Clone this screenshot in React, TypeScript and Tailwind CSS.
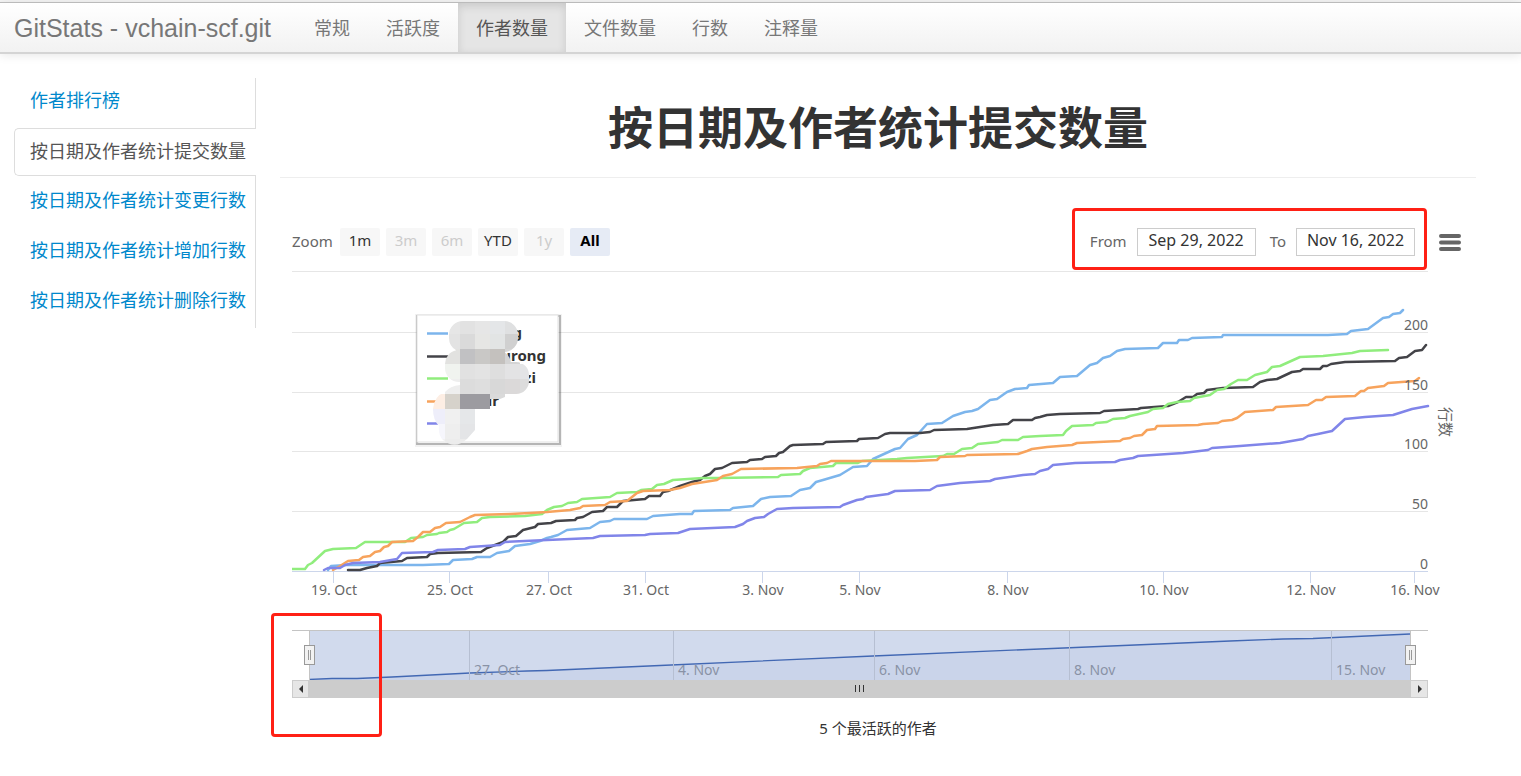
import React, { useState } from 'react';

interface Series {
  id: string;
  color: string;
  label: string;
  labelEnd: number;
  swatch: number;
  points: string;
}

const NAV_ITEMS = ['常规', '活跃度', '作者数量', '文件数量', '行数', '注释量'];

const SIDE_ITEMS = [
  '作者排行榜',
  '按日期及作者统计提交数量',
  '按日期及作者统计变更行数',
  '按日期及作者统计增加行数',
  '按日期及作者统计删除行数',
];

const RANGES = [
  { label: '1m', disabled: false },
  { label: '3m', disabled: true },
  { label: '6m', disabled: true },
  { label: 'YTD', disabled: false },
  { label: '1y', disabled: true },
  { label: 'All', disabled: false },
];

const SERIES: Series[] = [
  {
    id: 'a',
    color: '#7cb5ec',
    label: 'g',
    labelEnd: 522,
    swatch: 333,
    points:
      '328,570 331,566 347,565 423,565 449,564 453,560 472,559 477,557 490,557 497,553 509,551 515,546 530,544 540,541 547,538 551,537 558,535 567,530 590,528 600,522 610,521 614,519 647,519 653,516 680,514 692,514 694,511 730,510 733,508 753,506 761,499 770,497 791,496 800,490 810,488 816,482 823,480 840,475 853,467 867,466 873,459 895,449 900,448 908,439 917,435 927,424 942,423 953,416 965,412 972,411 978,409 990,400 997,399 1007,392 1015,389 1027,388 1029,385 1053,383 1060,377 1077,376 1090,365 1097,363 1103,358 1110,356 1117,351 1125,349 1158,348 1163,343 1177,343 1179,340 1188,340 1192,338 1222,337 1223,335 1328,335 1347,334 1351,331 1368,329 1383,318 1389,317 1393,314 1400,313 1403,310',
  },
  {
    id: 'b',
    color: '#434348',
    label: 'urong',
    labelEnd: 546,
    swatch: 356,
    points:
      '348,570 360,570 367,568 377,566 380,563 402,561 407,558 427,557 430,554 438,553 481,552 487,548 503,542 508,537 516,536 523,530 535,527 538,524 551,523 556,521 575,520 577,518 583,517 592,512 603,511 607,507 617,507 623,501 645,499 649,496 660,496 663,492 668,491 680,486 692,482 700,480 705,476 710,474 715,469 722,468 732,463 747,462 750,460 762,459 765,457 776,456 779,453 783,452 790,446 793,445 823,444 826,442 857,441 859,439 878,438 885,434 890,433 920,433 930,432 934,430 967,429 993,425 1008,424 1013,420 1032,420 1035,418 1040,417 1047,415 1060,414 1100,413 1104,411 1138,409 1141,408 1168,406 1178,402 1186,397 1193,397 1197,394 1204,393 1207,390 1223,388 1253,387 1260,382 1267,380 1277,379 1292,372 1300,371 1303,369 1320,369 1323,366 1327,366 1331,364 1345,362 1395,361 1399,358 1407,357 1415,351 1422,350 1426,345',
  },
  {
    id: 'c',
    color: '#90ed7d',
    label: 'zi',
    labelEnd: 536,
    swatch: 378,
    points:
      '292,569 305,569 308,565 312,563 325,551 333,549 356,548 359,546 365,542 405,542 411,538 423,537 427,535 437,534 439,533 447,532 450,530 454,529 464,523 477,522 482,518 490,517 525,516 542,514 547,510 554,507 562,506 568,503 577,502 582,499 610,497 617,493 637,492 641,490 652,489 657,485 664,484 673,480 703,478 720,478 778,477 781,475 800,474 803,471 810,468 833,466 836,463 858,463 862,461 897,459 907,458 943,456 947,454 954,454 962,449 972,448 978,444 998,442 1002,440 1018,440 1023,437 1040,436 1063,435 1066,431 1072,426 1093,425 1096,423 1107,422 1113,419 1125,418 1130,416 1148,412 1153,409 1163,408 1168,404 1177,402 1190,401 1194,398 1210,395 1217,390 1224,389 1231,384 1238,380 1247,380 1255,375 1267,372 1272,367 1280,366 1300,357 1323,356 1352,353 1360,351 1388,350',
  },
  {
    id: 'd',
    color: '#f7a35c',
    label: 'ir',
    labelEnd: 499,
    swatch: 401,
    points:
      '333,570 340,566 348,561 359,560 363,557 370,556 375,552 380,551 384,547 388,546 392,542 413,541 418,537 423,532 430,532 435,528 440,527 446,523 460,522 470,517 475,515 510,514 530,513 547,512 570,510 580,508 583,506 605,505 610,502 627,501 637,493 643,491 670,490 680,488 692,484 717,480 723,476 732,474 741,469 797,468 817,466 820,464 827,463 831,461 915,461 937,460 940,457 965,456 967,455 1018,454 1027,451 1032,449 1047,447 1072,445 1077,443 1120,441 1123,439 1130,438 1134,436 1142,435 1147,430 1155,429 1157,426 1198,425 1203,424 1218,423 1222,421 1232,420 1237,418 1245,412 1273,410 1276,407 1308,405 1316,400 1322,400 1326,397 1355,396 1361,391 1364,391 1368,388 1384,386 1388,383 1415,381 1419,378',
  },
  {
    id: 'e',
    color: '#8085e9',
    label: '',
    labelEnd: 476,
    swatch: 423,
    points:
      '324,570 328,568 340,568 345,565 353,563 380,562 397,559 402,553 433,552 438,550 465,549 470,547 500,545 505,542 547,540 593,538 600,536 645,535 650,534 678,533 690,529 735,527 743,524 747,521 755,518 764,517 768,514 777,509 793,508 840,507 843,505 857,500 863,499 866,497 888,494 895,491 930,490 937,486 960,483 990,481 995,479 1023,475 1035,474 1040,471 1048,469 1053,465 1075,463 1115,462 1120,460 1133,458 1138,456 1183,453 1208,450 1212,448 1240,446 1280,443 1303,439 1308,436 1318,434 1332,431 1345,419 1365,417 1393,415 1412,409 1428,406',
  },
];

const Y_AXIS = [
  { label: '200', y: 332 },
  { label: '150', y: 392 },
  { label: '100', y: 451 },
  { label: '50', y: 511 },
  { label: '0', y: 571 },
];

const X_AXIS = [
  { label: '19. Oct', x: 333 },
  { label: '25. Oct', x: 449 },
  { label: '27. Oct', x: 548 },
  { label: '31. Oct', x: 645 },
  { label: '3. Nov', x: 762 },
  { label: '5. Nov', x: 859 },
  { label: '8. Nov', x: 1007 },
  { label: '10. Nov', x: 1163 },
  { label: '12. Nov', x: 1310 },
  { label: '16. Nov', x: 1414 },
];

const NAVIGATOR_TICKS = [
  { label: '27. Oct', x: 177 },
  { label: '4. Nov', x: 381 },
  { label: '6. Nov', x: 582 },
  { label: '8. Nov', x: 777 },
  { label: '15. Nov', x: 1039 },
];

// Mosaic over the author names, one row per 15px band: [x, color]
const MOSAIC: { y: number; cells: [number, string][] }[] = [
  { y: 319, cells: [[445, '#e6e6e6'], [460, '#e2e2e2'], [475, '#e6e6e6'], [490, '#e4e6e8'], [505, '#dfe0e1']] },
  { y: 334, cells: [[445, '#e3e3e3'], [460, '#dadada'], [475, '#e6e6e4'], [490, '#e2e4e4'], [505, '#d0d0d0']] },
  { y: 349, cells: [[445, '#e2e2e0'], [460, '#c1c1c3'], [475, '#c9c8c6'], [490, '#c4c1be'], [505, '#d4d4d4']] },
  { y: 364, cells: [[445, '#f0f3ef'], [460, '#e1e1e1'], [475, '#e3e3e3'], [490, '#dedede'], [505, '#e3e3e4'], [520, '#e3e4e6']] },
  { y: 379, cells: [[445, '#eeeeee'], [460, '#dcdcdc'], [475, '#dedede'], [490, '#d8d8d8'], [505, '#dbd9d9'], [520, '#dcdcdc']] },
  { y: 394, cells: [[430, '#fdeee4'], [445, '#d6d2cb'], [460, '#9c9ba0'], [475, '#9c9ba0'], [490, '#dadada']] },
  { y: 409, cells: [[430, '#eeeefa'], [445, '#f0f0f0'], [460, '#e5e7e9']] },
  { y: 424, cells: [[430, '#f6f6fc'], [445, '#eeeeee'], [460, '#e4e5e7']] },
  { y: 439, cells: [[430, '#f2f2f2'], [445, '#ececec'], [460, '#ececec']] },
];

const Navbar: React.FC = () => (
  <header className="border-t-2 border-[#f5f5f5]">
    <nav className="flex h-[52px] items-stretch border-t border-b-2 border-t-[#bbbbbb] border-b-[#d4d4d4] bg-gradient-to-b from-white to-[#f2f2f2] pl-3.5 shadow-[0_1px_10px_rgba(0,0,0,0.1)]">
      <a href="#" className="mr-[25px] flex items-center pt-0.5 font-['Liberation_Sans',sans-serif] text-[25px] text-[#777777]">
        GitStats - vchain-scf.git
      </a>
      {NAV_ITEMS.map((item) => (
        <a
          key={item}
          href="#"
          className={
            item === '作者数量'
              ? 'flex items-center bg-[#e5e5e5] px-[18px] text-lg text-[#555555] shadow-[inset_0_3px_8px_rgba(0,0,0,0.125)]'
              : 'flex items-center px-[18px] text-lg text-[#777777]'
          }
        >
          {item}
        </a>
      ))}
    </nav>
  </header>
);

const Sidebar: React.FC = () => (
  <ul className="w-[242px] shrink-0">
    {SIDE_ITEMS.map((item, i) => (
      <li key={item} className={i === 1 ? 'h-[50px]' : 'h-[50px] border-r border-[#dddddd]'}>
        {i === 1 ? (
          <div className="flex h-full flex-col">
            <a href="#" className="flex h-12 items-center rounded-l-[5px] border border-r-0 border-[#dddddd] pb-0.5 pl-[15px] text-lg whitespace-nowrap text-[#555555]">
              {item}
            </a>
            <span className="flex-1 border-r border-[#dddddd]" />
          </div>
        ) : (
          <a href="#" className="flex h-11 items-center pl-4 text-lg whitespace-nowrap text-[#0088cc]">
            {item}
          </a>
        )}
      </li>
    ))}
  </ul>
);

const DateField: React.FC<{ id: string; label: string; value: string }> = ({ id, label, value }) => (
  <div className="flex items-center">
    <label htmlFor={id} className="mr-2.5 pb-0.5 text-[#666666]">
      {label}
    </label>
    <input
      id={id}
      type="text"
      defaultValue={value}
      className="h-7 w-[119px] border border-[#cccccc] bg-white pb-1 text-center text-base text-[#333333] outline-none"
    />
  </div>
);

const Toolbar: React.FC = () => {
  const [range, setRange] = useState('All');

  return (
    <div className="flex h-7 items-center pr-[15px] text-[15px]">
      <span className="w-12 pb-0.5 text-[#666666]">Zoom</span>
      <div className="flex gap-1.5">
        {RANGES.map(({ label, disabled }) => (
          <button
            key={label}
            type="button"
            disabled={disabled}
            onClick={() => setRange(label)}
            className={
              label === range
                ? 'h-7 w-10 rounded-[2px] bg-[#e6ebf5] pb-1 font-bold text-black'
                : 'h-7 w-10 rounded-[2px] bg-[#f7f7f7] pb-1 text-[#333333] disabled:text-[#cccccc]'
            }
          >
            {label}
          </button>
        ))}
      </div>

      <div className="relative ml-auto flex gap-3.5">
        <DateField id="from" label="From" value="Sep 29, 2022" />
        <DateField id="to" label="To" value="Nov 16, 2022" />
        <div className="pointer-events-none absolute -top-5 -right-3 -bottom-3.5 -left-[18px] rounded-[4px] border-[3px] border-[#ff2015]" />
      </div>

      <button type="button" aria-label="menu" className="ml-6">
        <svg width="22" height="17" viewBox="0 0 22 17" stroke="#666666" strokeWidth="4" strokeLinecap="round">
          <path d="M2 2H20M2 8.5H20M2 15H20" />
        </svg>
      </button>
    </div>
  );
};

const Legend: React.FC = () => (
  <g>
    <rect x="417" y="316" width="143" height="129" fill="none" stroke="#000" strokeOpacity="0.05" strokeWidth="4" />
    <rect x="417" y="316" width="143" height="128" fill="none" stroke="#000" strokeOpacity="0.25" strokeWidth="2" />
    <rect x="417" y="315" width="141" height="127" fill="#ffffff" stroke="#e0e0e0" />
    {SERIES.map((s) => (
      <g key={s.id}>
        <path d={`M427 ${s.swatch}.5H448`} stroke={s.color} strokeWidth="2.5" />
        <text x={s.labelEnd} y={s.swatch + 5} textAnchor="end" fill="#333333" className="text-[15px] font-bold">
          {s.label}
        </text>
      </g>
    ))}
    <clipPath id="names">
      <rect x="449" y="321" width="69" height="31" rx="14" />
      <rect x="445" y="350" width="66" height="32" rx="14" />
      <rect x="460" y="345" width="45" height="50" />
      <rect x="480" y="362" width="49" height="32" rx="13" />
      <path d="M445 392Q450 386 460 385H505V397L500 399H490V409H475V430L467 439Q455 450 443 440Q438 435 439 426Q433 420 433 409Q434 396 445 392Z" />
    </clipPath>
    <g clipPath="url(#names)" shapeRendering="crispEdges">
      {MOSAIC.map((row) =>
        row.cells.map(([x, color]) => <rect key={`${x}-${row.y}`} x={x} y={row.y} width="15" height="15" fill={color} />)
      )}
    </g>
  </g>
);

const Chart: React.FC = () => (
  <svg viewBox="292 262 1184 346" className="block w-full text-[14px]">
    <path d="M292 271.5H1428" stroke="#e6e6e6" />
    {Y_AXIS.map(({ label, y }) => (
      <path key={label} d={`M292 ${y}.5H1428`} stroke={y === 571 ? '#ccd6eb' : '#e6e6e6'} />
    ))}
    {X_AXIS.map(({ label, x }) => (
      <path key={label} d={`M${x}.5 571V583`} stroke="#ccd6eb" />
    ))}

    {SERIES.map((s) => (
      <polyline key={s.id} points={s.points} fill="none" stroke={s.color} strokeWidth="2.5" strokeLinejoin="round" strokeLinecap="round" />
    ))}

    <g fill="#666666">
      {Y_AXIS.map(({ label, y }) => (
        <text key={label} x="1428" y={y - 2} textAnchor="end">
          {label}
        </text>
      ))}
      {X_AXIS.map(({ label, x }) => (
        <text key={label} x={x + 1} y="595" textAnchor="middle">
          {label}
        </text>
      ))}
      <text transform="translate(1440 422) rotate(90)" textAnchor="middle" className="text-[15px]">
        行数
      </text>
    </g>

    <Legend />
  </svg>
);

const Handle: React.FC = () => (
  <svg width="11" height="20" viewBox="0 0 11 20">
    <rect x="0.5" y="0.5" width="10" height="19" fill="#f2f2f2" stroke="#999999" />
    <path d="M4.5 5V15M6.5 5V15" stroke="#999999" />
  </svg>
);

const Navigator: React.FC = () => (
  <div className="relative mr-12">
    <svg viewBox="0 0 1136 50" className="block w-full text-[14px]">
      <path d="M17.5 49.5L40 48.5H65L100 47L178 43L235 41L255 40.5L368 35.5L581 26L748 19L938 11L991 9L1021 8.5L1118 4V50H17.5Z" fill="#335cad" fillOpacity="0.05" />
      <path d="M17.5 49.5L40 48.5H65L100 47L178 43L235 41L255 40.5L368 35.5L581 26L748 19L938 11L991 9L1021 8.5L1118 4" fill="none" stroke="#335cad" strokeWidth="1.3" />
      {NAVIGATOR_TICKS.map(({ label, x }) => (
        <g key={label}>
          <path d={`M${x}.5 0V50`} stroke="#d8d8d8" />
          <text x={x + 5} y="45" fill="#999999">
            {label}
          </text>
        </g>
      ))}
      <rect x="17" y="0" width="1101" height="50" fill="#6685c2" fillOpacity="0.3" />
      <path d="M0 0.5H1136M17.5 0V50M1118.5 0V50" stroke="#c4c4c4" />
    </svg>
    <button type="button" aria-label="start" className="absolute top-[15px] left-3">
      <Handle />
    </button>
    <button type="button" aria-label="end" className="absolute top-[15px] right-3">
      <Handle />
    </button>

    {/* Scrollbar */}
    <div className="flex h-[18px]">
      <button type="button" aria-label="left" className="w-[17px] border border-[#cccccc] bg-[#e6e6e6]">
        <svg width="15" height="16" viewBox="0 0 15 16" fill="#333333">
          <path d="M10 4V12L6 8Z" />
        </svg>
      </button>
      <div className="flex flex-1 items-center justify-center bg-[#cccccc]">
        <svg width="10" height="8" viewBox="0 0 10 8" stroke="#333333">
          <path d="M0.5 0V7M4.5 0V7M8.5 0V7" />
        </svg>
      </div>
      <button type="button" aria-label="right" className="w-[18px] border border-[#cccccc] bg-[#e6e6e6]">
        <svg width="16" height="16" viewBox="0 0 16 16" fill="#333333">
          <path d="M7 4V12L11 8Z" />
        </svg>
      </button>
    </div>

    <div className="pointer-events-none absolute -top-[17px] -left-[21px] h-[124px] w-[111px] rounded-[4px] border-[3px] border-[#ff2015]" />
  </div>
);

export default function App() {
  return (
    <div className="min-h-screen bg-white pb-9 font-['Noto_Sans','Noto_Sans_CJK_SC',sans-serif]">
      <Navbar />
      <div className="mt-6 flex gap-6 pr-[45px] pl-3.5">
        <Sidebar />
        <main className="min-w-0 flex-1">
          <h1 className="flex h-[100px] items-center justify-center border-b border-[#eeeeee] text-[45px] font-bold text-[#333333]">
            按日期及作者统计提交数量
          </h1>
          <div className="pt-[50px] pl-3">
            <Toolbar />
            <div className="mt-1.5">
              <Chart />
            </div>
            <div className="mt-[22px]">
              <Navigator />
            </div>
          </div>
          <p className="mt-5 text-center text-[15px] leading-5 text-[#333333]">5 个最活跃的作者</p>
        </main>
      </div>
    </div>
  );
}
